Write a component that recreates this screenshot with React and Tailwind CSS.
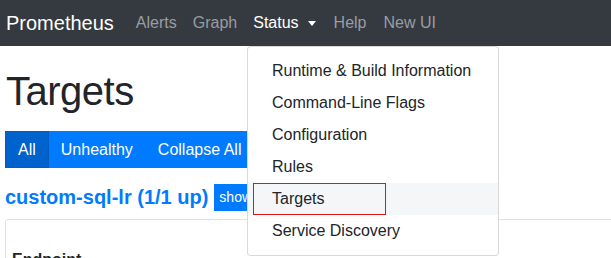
import React from "react";

export default function App() {
  const items = [
    "Runtime & Build Information",
    "Command-Line Flags",
    "Configuration",
    "Rules",
    "Targets",
    "Service Discovery",
  ];
  return (
    <div
      className="relative w-[611px] h-[258px] overflow-hidden bg-white text-[#212529]"
      style={{ fontFamily: '"Liberation Sans", Arial, sans-serif' }}
    >
      {/* Navbar */}
      <nav className="flex h-[46px] items-center bg-[#343a40] pl-[6px]">
        <span className="text-[20px] leading-[30px] text-white mr-[14px]">Prometheus</span>
        <div className="flex items-center text-[16px] leading-[24px]">
          <span className="px-[8px] text-[#9a9da0]">Alerts</span>
          <span className="px-[8px] text-[#9a9da0]">Graph</span>
          <span className="flex items-center px-[8px] text-white">
            Status
            <span className="ml-[9px] inline-block h-0 w-0 border-x-[4.5px] border-t-[5px] border-x-transparent border-t-white" />
          </span>
          <span className="px-[8px] ml-[2px] text-[#9a9da0]">Help</span>
          <span className="px-[8px] ml-[1px] text-[#9a9da0]">New UI</span>
        </div>
      </nav>

      {/* Content */}
      <div className="w-[700px] pl-[5px]">
        <h1 className="mt-[21px] text-[40px] leading-[48px] tracking-[-0.5px] pl-[1px] font-normal">Targets</h1>
        <div className="mt-[16px] flex h-[37px] text-[16px] leading-[24px] text-white">
          <span className="flex items-center bg-[#0062cc] border border-[#005cbf] px-[12px]">All</span>
          <span className="flex items-center bg-[#007bff] border border-[#007bff] px-[11px]">Unhealthy</span>
          <span className="flex items-center bg-[#007bff] border border-[#007bff] px-[12px]">Collapse All</span>
        </div>
        <div className="mt-[12px] flex h-[34px] items-center">
          <span className="text-[20px] font-bold leading-[30px] text-[#007bff]">custom-sql-lr (1/1 up)</span>
          <span className="ml-[6px] flex h-[27px] items-center bg-[#007bff] px-[5px] text-[14px] text-white">show</span>
        </div>
        <div className="mt-[5px] border border-[#dee2e6] rounded-[3px] pl-[6px] pt-[28px] h-[200px]">
          <span className="text-[16px] font-bold leading-[24px]">Endpoint</span>
        </div>
      </div>

      {/* Dropdown */}
      <div className="absolute left-[247px] top-[46px] w-[252px] rounded-[4px] border border-[rgba(0,0,0,0.15)] bg-white py-[8px]">
        {items.map((t) => (
          <div
            key={t}
            className={
              t === "Targets"
                ? "relative h-[32px] flex items-center px-[24px] text-[16px] bg-[#f5f6f8]"
                : "h-[32px] flex items-center px-[24px] text-[16px]"
            }
          >
            {t}
            {t === "Targets" && (
              <span className="absolute left-[5px] top-0 h-[32px] w-[133px] border border-[#e0121b]" />
            )}
          </div>
        ))}
      </div>
    </div>
  );
}
